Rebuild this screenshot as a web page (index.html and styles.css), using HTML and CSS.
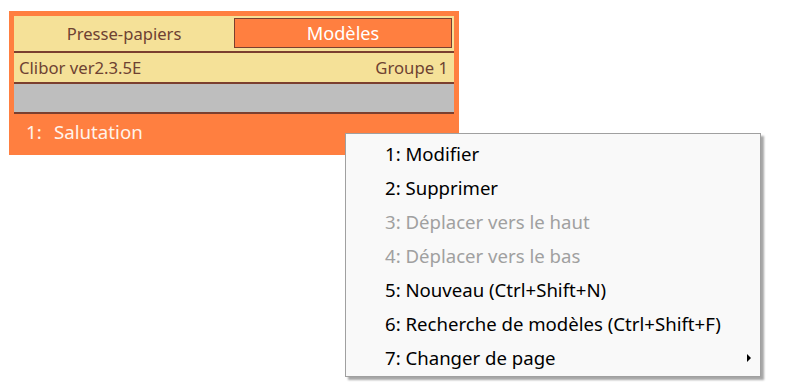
FILE: index.html
```html
<!DOCTYPE html>
<html lang="fr">
<head>
  <meta charset="UTF-8">
  <title>Clibor - Modèles</title>
  <meta name="viewport" content="width=device-width, initial-scale=1.0">
  <link rel="stylesheet" href="styles.css">
</head>

<body>
  <div class="panel">
    <div class="tabs">
      <div class="tab">Presse-papiers</div>
      <div class="tab active">Modèles</div>
    </div>

    <div class="info">
      <span>Clibor ver2.3.5E</span>
      <span>Groupe 1</span>
    </div>

    <div class="search"></div>

    <div class="entry">
      <span class="num">1:</span>
      <span>Salutation</span>
    </div>
  </div>

  <div class="menu">
    <div class="menu-item">1: Modifier</div>
    <div class="menu-item">2: Supprimer</div>
    <div class="menu-item disabled">3: Déplacer vers le haut</div>
    <div class="menu-item disabled">4: Déplacer vers le bas</div>
    <div class="menu-item">5: Nouveau (Ctrl+Shift+N)</div>
    <div class="menu-item">6: Recherche de modèles (Ctrl+Shift+F)</div>
    <div class="menu-item sub">7: Changer de page</div>
  </div>
</body>
</html>
```

FILE: styles.css
```css
body {
  margin: 0;
  font-family: 'Noto Sans', 'Open Sans', sans-serif;
  background-color: #ffffff;
}

.panel {
  margin: 11px 0 0 9px;
  width: 440px;
  height: 139px;
  padding: 5px 5px 0;
  background-color: #ff7f40;
}

.tabs {
  display: flex;
  height: 35px;
  background-color: #f5e198;
  border-bottom: 2px solid #7b3f2f;
}

.tab {
  width: 220px;
  line-height: 36px;
  font-size: 16.6px;
  color: #6e4232;
  text-align: center;
}

.tab.active {
  flex: 1;
  margin: 2px 2px 3px 0;
  line-height: 29px;
  border: 1px solid #7b3f2f;
  background-color: #ff7f40;
  font-size: 18.2px;
  color: #ffffff;
}

.info {
  display: flex;
  justify-content: space-between;
  height: 28px;
  line-height: 28px;
  padding: 1px 6px 0 5px;
  font-size: 16.7px;
  color: #6e4232;
  background-color: #f5e198;
  border-bottom: 2px solid #7b3f2f;
}

.search {
  height: 28px;
  background-color: #bebebe;
  border-bottom: 2px solid #7b3f2f;
}

.entry {
  display: flex;
  padding-left: 12px;
  line-height: 36px;
  font-size: 18.7px;
  color: #fff3ea;
}

.entry .num {
  width: 28px;
}

.menu {
  position: absolute;
  left: 345px;
  top: 133px;
  width: 414px;
  padding: 3px 0 1px;
  background-color: #f9f9f9;
  border: 1px solid #a0a0a0;
  box-shadow: 3px 3px 2px rgba(0, 0, 0, 0.35);
}

.menu-item {
  position: relative;
  height: 34px;
  line-height: 34px;
  padding-left: 39px;
  font-size: 18.6px;
  color: #000000;
}

.menu-item.disabled {
  color: #a0a0a0;
}

.menu-item.sub::after {
  content: "";
  position: absolute;
  right: 9px;
  top: 13px;
  border-left: 4px solid #000000;
  border-top: 4px solid transparent;
  border-bottom: 4px solid transparent;
}
```
